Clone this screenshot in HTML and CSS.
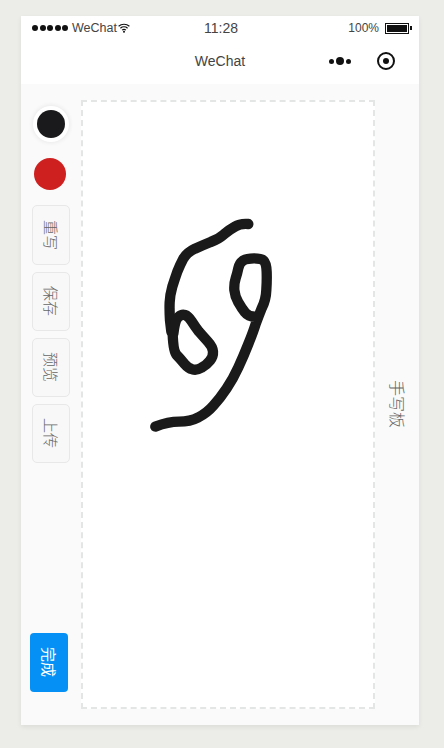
FILE: index.html
```html
<!DOCTYPE html>
<html lang="zh">
<head>
<meta charset="utf-8">
<title>WeChat</title>
<link rel="stylesheet" href="styles.css">
</head>
<body>
<div class="phone">
  <div class="status">
    <div class="status-left">
      <span class="signal"><i></i><i></i><i></i><i></i><i></i></span>
      <span class="carrier">WeChat</span>
      <svg class="wifi" viewBox="0 0 12 10" width="12" height="10"><path d="M.6 3.2C3.6.6 8.4.6 11.4 3.2M2.4 5.2C4.4 3.5 7.6 3.5 9.6 5.2M4.1 7.1C5.2 6.2 6.8 6.2 7.9 7.1" fill="none" stroke="#111" stroke-width="1.2"/><circle cx="6" cy="8.8" r="1" fill="#111"/></svg>
    </div>
    <div class="time">11:28</div>
    <div class="status-right">
      <span class="pct">100%</span>
      <span class="battery"><b></b></span><span class="nub"></span>
    </div>
  </div>
  <div class="nav">
    <div class="title">WeChat</div>
    <div class="actions">
      <span class="more"><i></i><i class="big"></i><i></i></span>
      <span class="record"><i></i></span>
    </div>
  </div>
  <div class="main">
    <div class="tools">
      <div class="swatch swatch-black"></div>
      <div class="swatch swatch-red"></div>
      <div class="tool first">重写</div>
      <div class="tool">保存</div>
      <div class="tool">预览</div>
      <div class="tool">上传</div>
      <div class="done">完成</div>
    </div>
    <div class="board">
      <svg class="ink" viewBox="0 0 290 605" width="290" height="605">
        <g transform="translate(57 108) scale(.3333)" fill="none" stroke="#1a1a1a" stroke-width="31" stroke-linecap="round" stroke-linejoin="round">
          <path d="M325 42Q300 40 285 50Q270 58 252 73Q235 88 212 96Q190 105 165 116Q140 128 130 146Q120 165 112 185Q105 205 97 230Q90 255 89 277Q88 300 90 331L94 365"/>
          <path d="M100 372Q105 330 115 321Q125 312 135 315Q145 318 155 334Q165 350 177 365Q190 380 204 395Q218 410 219 425Q220 440 210 452Q200 465 185 473Q170 482 157 478Q145 475 132 460Q120 445 110 435Q100 425 98 372"/>
          <path d="M46 650Q85 635 117 635Q150 635 175 622Q200 610 220 587Q240 565 260 535Q280 505 295 472Q310 440 325 402Q340 365 347 342Q355 320 365 295Q378 270 379 240Q381 210 380 185Q379 160 371 152Q365 145 342 145Q320 145 309 152Q298 160 295 175Q292 190 287 205Q282 220 283 240Q285 260 295 277Q305 295 315 307Q325 320 345 320"/>
        </g>
      </svg>
    </div>
    <div class="side"><span class="side-label">手写板</span></div>
  </div>
</div>
</body>
</html>
```

FILE: styles.css
```css
* { box-sizing: border-box; }
html, body { margin: 0; height: 100%; }
body {
  background: #ecece8;
  padding: 16px 25px 0 21px;
  font-family: "Liberation Sans", "Noto Sans CJK SC", sans-serif;
  overflow: hidden;
}
.phone {
  width: 398px;
  height: 709px;
  background: #fafafa;
  display: flex;
  flex-direction: column;
  box-shadow: 0 2px 5px rgba(0, 0, 0, .07);
}
.status {
  height: 24px;
  background: #fff;
  padding: 0 7px 0 11px;
  display: grid;
  grid-template-columns: 1fr auto 1fr;
  align-items: center;
  color: #444;
  font-size: 12px;
}
.status-left { display: flex; align-items: center; }
.signal { display: flex; gap: 1.5px; margin-right: 4px; }
.signal i { width: 6px; height: 6px; border-radius: 50%; background: #111; }
.carrier { width: 46px; font-size: 12.5px; }
.wifi { display: block; }
.time { font-size: 14px; color: #444; margin-right: 2px; }
.status-right { display: flex; align-items: center; justify-content: flex-end; }
.pct { margin-right: 6px; }
.battery {
  width: 24px;
  height: 11px;
  border: 1px solid #111;
  padding: 1px;
  display: block;
}
.battery b { display: block; height: 100%; background: #111; }
.nub { width: 2px; height: 4px; background: #111; margin-left: 1px; }
.nav {
  height: 44px;
  background: #fff;
  position: relative;
  display: flex;
  align-items: center;
  justify-content: flex-end;
  padding: 0 24px 2px 0;
}
.title {
  position: absolute;
  left: 0;
  right: 0;
  top: 13px;
  text-align: center;
  font-size: 14px;
  color: #444;
}
.actions { display: flex; align-items: center; gap: 26px; }
.more { display: flex; align-items: center; gap: 2px; }
.more i { width: 5px; height: 5px; border-radius: 50%; background: #111; }
.more i.big { width: 8px; height: 8px; }
.record {
  width: 18px;
  height: 18px;
  border: 2px solid #111;
  border-radius: 50%;
  display: flex;
  align-items: center;
  justify-content: center;
}
.record i { width: 6px; height: 6px; border-radius: 50%; background: #111; }
.main { flex: 1; display: flex; padding: 16px 0; min-height: 0; }
.tools {
  width: 60px;
  display: flex;
  flex-direction: column;
  align-items: flex-start;
}
.swatch { border-radius: 50%; flex: none; }
.swatch-black {
  width: 28px;
  height: 28px;
  margin: 10px 0 0 16px;
  background: #1a1a1c;
  box-shadow: 0 0 0 4px #fff, 0 0 4px 5px rgba(0, 0, 0, .07);
}
.swatch-red {
  width: 32px;
  height: 32px;
  margin: 20px 0 0 13px;
  background: #cf2020;
}
.tool {
  width: 38px;
  height: 59px;
  margin: 7px 0 0 11px;
  border: 1px solid #e8e8e8;
  border-radius: 5px;
  background: #f8f8f8;
  color: #666;
  font-size: 15px;
  font-weight: 300;
  writing-mode: vertical-rl;
  text-orientation: sideways;
  display: flex;
  align-items: center;
  justify-content: center;
}
.tool.first { margin-top: 15px; height: 60px; }
.done {
  width: 38px;
  height: 59px;
  margin: auto 0 17px 9px;
  background: #0590f5;
  border-radius: 4px;
  color: #fff;
  font-size: 15px;
  writing-mode: vertical-rl;
  text-orientation: sideways;
  display: flex;
  align-items: center;
  justify-content: center;
}
.board {
  width: 294px;
  height: 609px;
  background: #fff;
  border: 2px dashed #e4e6e6;
  flex: none;
}
.ink { display: block; }
.side {
  flex: 1;
  display: flex;
  align-items: center;
  justify-content: center;
}
.side-label {
  color: #666;
  font-size: 16px;
  font-weight: 300;
  writing-mode: vertical-rl;
  text-orientation: sideways;
  margin-left: 2px;
}
```
